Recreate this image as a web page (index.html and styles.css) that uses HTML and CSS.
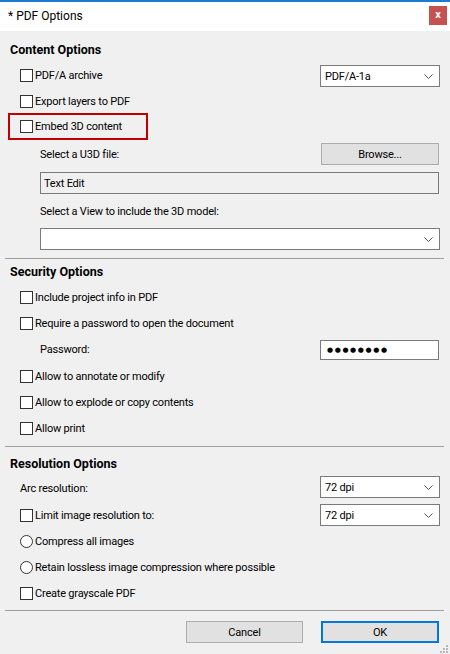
FILE: index.html
```html
<!DOCTYPE html>
<html>
<head>
<meta charset="utf-8">
<link rel="stylesheet" href="styles.css">
</head>
<body>
<div class="window">
  <div class="titlebar">
    <span class="title">* PDF Options</span>
    <span class="close">x</span>
  </div>
  <div class="content">
    <div class="header h-content">Content Options</div>
    <div class="row">
      <span class="cb"></span><span class="lbl">PDF/A archive</span>
      <div class="select sel-top"><span>PDF/A-1a</span><svg class="chev" width="9" height="5" viewBox="0 0 9 5"><polyline points="0.5,0.5 4.5,4.5 8.5,0.5" fill="none" stroke="#555" stroke-width="1"/></svg></div>
    </div>
    <div class="row">
      <span class="cb"></span><span class="lbl">Export layers to PDF</span>
    </div>
    <div class="row red">
      <span class="cb"></span><span class="lbl">Embed 3D content</span>
    </div>
    <div class="row sub file-row">
      <span class="lbl">Select a U3D file:</span>
      <div class="btn browse">Browse...</div>
    </div>
    <div class="textedit">Text Edit</div>
    <div class="sub view-label">Select a View to include the 3D model:</div>
    <div class="select wide"><span></span><svg class="chev" width="9" height="5" viewBox="0 0 9 5"><polyline points="0.5,0.5 4.5,4.5 8.5,0.5" fill="none" stroke="#555" stroke-width="1"/></svg></div>
    <div class="sep sep1"></div>

    <div class="header h-sec">Security Options</div>
    <div class="row first">
      <span class="cb"></span><span class="lbl">Include project info in PDF</span>
    </div>
    <div class="row">
      <span class="cb"></span><span class="lbl">Require a password to open the document</span>
    </div>
    <div class="row sub pw-row">
      <span class="lbl">Password:</span>
      <div class="password"><span class="dots">●●●●●●●●</span></div>
    </div>
    <div class="row">
      <span class="cb"></span><span class="lbl">Allow to annotate or modify</span>
    </div>
    <div class="row">
      <span class="cb"></span><span class="lbl">Allow to explode or copy contents</span>
    </div>
    <div class="row">
      <span class="cb"></span><span class="lbl">Allow print</span>
    </div>
    <div class="sep sep2"></div>

    <div class="header h-res">Resolution Options</div>
    <div class="row first arc-row">
      <span class="lbl">Arc resolution:</span>
      <div class="select sel-arc"><span>72 dpi</span><svg class="chev" width="9" height="5" viewBox="0 0 9 5"><polyline points="0.5,0.5 4.5,4.5 8.5,0.5" fill="none" stroke="#555" stroke-width="1"/></svg></div>
    </div>
    <div class="row">
      <span class="cb"></span><span class="lbl">Limit image resolution to:</span>
      <div class="select"><span>72 dpi</span><svg class="chev" width="9" height="5" viewBox="0 0 9 5"><polyline points="0.5,0.5 4.5,4.5 8.5,0.5" fill="none" stroke="#555" stroke-width="1"/></svg></div>
    </div>
    <div class="row">
      <span class="rb"></span><span class="lbl">Compress all images</span>
    </div>
    <div class="row">
      <span class="rb"></span><span class="lbl">Retain lossless image compression where possible</span>
    </div>
    <div class="row">
      <span class="cb"></span><span class="lbl">Create grayscale PDF</span>
    </div>
    <div class="sep sep3"></div>
    <div class="buttons">
      <div class="btn cancel">Cancel</div>
      <div class="btn ok">OK</div>
    </div>
    <svg class="grip" width="10" height="10" viewBox="0 0 10 10">
      <rect x="8" y="2" width="2" height="2" fill="#b8b8b8"/>
      <rect x="5" y="5" width="2" height="2" fill="#b8b8b8"/>
      <rect x="8" y="5" width="2" height="2" fill="#b8b8b8"/>
      <rect x="2" y="8" width="2" height="2" fill="#b8b8b8"/>
      <rect x="5" y="8" width="2" height="2" fill="#b8b8b8"/>
      <rect x="8" y="8" width="2" height="2" fill="#b8b8b8"/>
    </svg>
  </div>
</div>
</body>
</html>
```
FILE: styles.css
```css
* { box-sizing: border-box; }
html, body { margin: 0; padding: 0; }
body {
  width: 450px;
  height: 654px;
  overflow: hidden;
  font-family: Roboto, "Noto Sans", sans-serif;
  font-size: 11px;
  letter-spacing: -0.2px;
  color: #000;
  background: #f0f0f0;
}
.window { width: 450px; height: 654px; display: flex; flex-direction: column; }
.titlebar {
  height: 31px;
  border-top: 2px solid #1b7bd0;
  background: #fff;
  display: flex;
  align-items: center;
  justify-content: space-between;
  padding: 0 3px 0 8px;
}
.title { font-size: 12px; letter-spacing: 0; line-height: 16px; margin-top: -2px; }
.close {
  width: 18px; height: 19px;
  background: #c75050;
  color: #fff;
  font-weight: bold;
  font-size: 11px;
  letter-spacing: 0;
  line-height: 17px;
  text-align: center;
  margin-top: -2px;
}
.content { flex: 1; position: relative; background: #f0f0f0; }
.header { font-weight: bold; font-size: 12.5px; letter-spacing: 0; height: 20px; line-height: 20px; padding-left: 10px; }
.h-content { margin-top: 9px; }
.row {
  height: 26px;
  display: flex;
  align-items: center;
  padding-left: 20px;
  padding-right: 10px;
}
.row.first { margin-top: 2px; }
.h-content + .row { margin-top: 2px; }
.cb {
  width: 13px; height: 13px;
  border: 1px solid #333;
  background: #fff;
  flex: none;
}
.rb {
  width: 13px; height: 13px;
  border: 1px solid #333;
  border-radius: 50%;
  background: #fff;
  flex: none;
}
.lbl { margin-left: 2px; white-space: nowrap; }
.row.sub .lbl, .arc-row .lbl { margin-left: 0; }
.select {
  margin-left: auto;
  width: 120px; height: 22px;
  background: #fff;
  border: 1px solid #7a7a7a;
  display: flex;
  align-items: center;
  justify-content: space-between;
  padding: 0 6px 0 4px;
  flex: none;
}
.sel-top { margin-top: 2px; }
.chev { display: block; }
.red {
  height: 27px;
  margin-top: -1px;
  margin-left: 8px;
  width: 140px;
  border: 2px solid #c00000;
  padding-left: 10px;
}
.sub { padding-left: 40px; }
.file-row { margin-top: 3px; height: 22px; padding-right: 11px; }
.btn {
  background: #e1e1e1;
  border: 1px solid #adadad;
  height: 22px;
  display: flex;
  align-items: center;
  justify-content: center;
  flex: none;
}
.browse { margin-left: auto; width: 118px; }
.textedit {
  margin: 7px 11px 0 40px;
  height: 22px;
  border: 1px solid #7a7a7a;
  background: #f0f0f0;
  padding-left: 3px;
  display: flex;
  align-items: center;
}
.view-label { margin-top: 8px; height: 20px; line-height: 20px; }
.select.wide { margin: 6px 10px 0 40px; width: auto; }
.sep { height: 1px; background: #a0a0a0; margin-left: 5px; margin-right: 6px; }
.sep1 { margin-top: 8px; }
.h-sec { margin-top: 3px; }
.pw-row { height: 27px; padding-right: 11px; }
.password {
  margin-left: auto;
  width: 119px; height: 20px;
  border: 1px solid #7a7a7a;
  background: #fff;
  display: flex;
  align-items: center;
  padding-left: 6px;
}
.dots { font-family: "DejaVu Sans", sans-serif; font-size: 7px; letter-spacing: 1.6px; line-height: 10px; }
.sep2 { margin-top: 5px; }
.h-res { margin-top: 7px; }
.arc-row { align-items: flex-start; }
.arc-row .lbl { margin-top: 6px; }
.sep3 { margin-top: 4px; }
.buttons {
  margin-top: 10px;
  display: flex;
  justify-content: flex-end;
  gap: 18px;
  padding-right: 11px;
}
.cancel { width: 117px; }
.ok { width: 118px; border: 2px solid #0078d7; }
.grip { position: absolute; right: 2px; bottom: 1px; }
```
